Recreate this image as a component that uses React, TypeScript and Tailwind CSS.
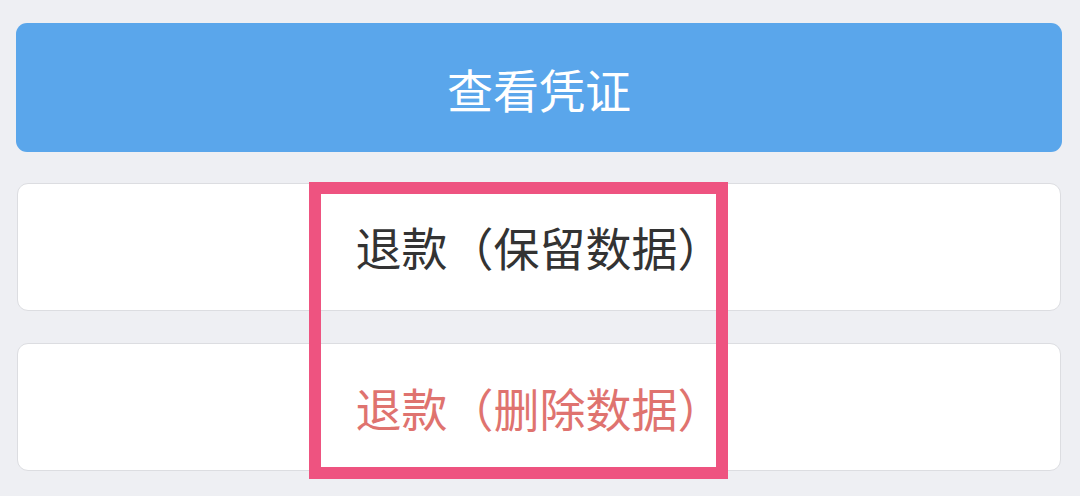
import React from "react";

export default function App() {
  return (
    <div
      className="relative w-[1080px] h-[496px] overflow-hidden bg-[#eeeff3] pt-[23px] pl-[16px] pr-[18px]"
      style={{ fontFamily: '"Noto Sans CJK SC", "Noto Sans", sans-serif' }}
    >
      <div className="flex flex-col">
        <div className="h-[129px] rounded-[11px] bg-[#5aa6eb] flex items-center justify-center">
          <span className="text-[46px] leading-none text-white">查看凭证</span>
        </div>
        <div className="mt-[31px] ml-[1px] mr-[1px] h-[128px] rounded-[11px] bg-white border border-[#dcdde1] flex items-center justify-center">
          <span className="text-[46px] leading-none text-[#333333] pb-[2px] pl-[1px]">退款（保留数据）</span>
        </div>
        <div className="mt-[32px] ml-[1px] mr-[1px] h-[128px] rounded-[11px] bg-white border border-[#dcdde1] flex items-center justify-center">
          <span className="text-[46px] leading-none text-[#df736f] pl-[1px]">退款（删除数据）</span>
        </div>
      </div>
      <div className="absolute left-[309px] top-[182px] w-[419px] h-[297px] border-[12px] border-[#ee5380]" />
    </div>
  );
}
